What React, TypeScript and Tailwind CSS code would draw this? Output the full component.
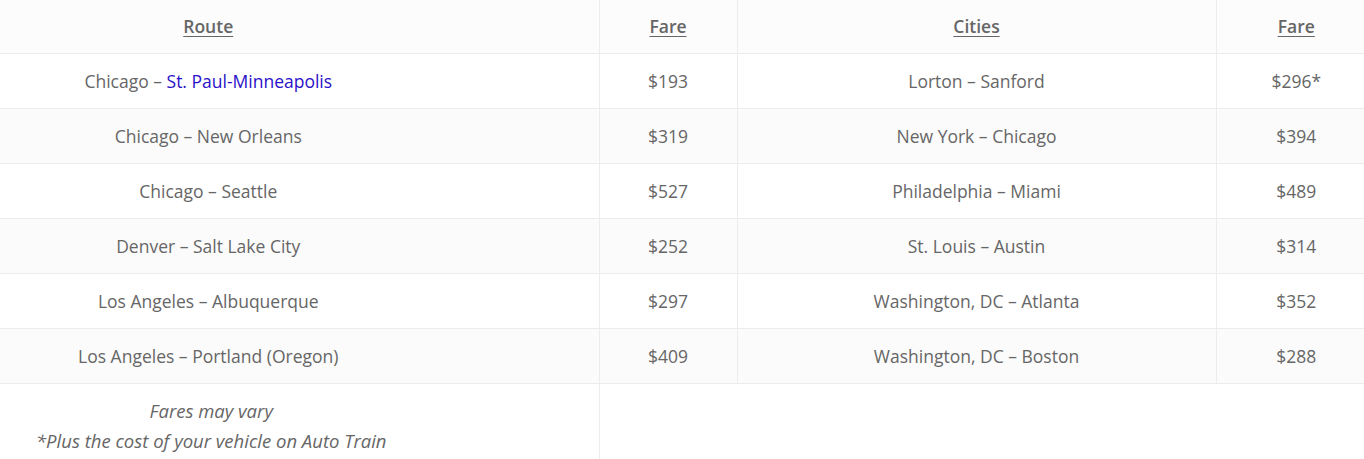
import React from "react";

const rows: [React.ReactNode, string, string, string][] = [
  [
    <>
      Chicago – <span className="text-[#2a10c8]">St. Paul-Minneapolis</span>
    </>,
    "$193",
    "Lorton – Sanford",
    "$296*",
  ],
  ["Chicago – New Orleans", "$319", "New York – Chicago", "$394"],
  ["Chicago – Seattle", "$527", "Philadelphia – Miami", "$489"],
  ["Denver – Salt Lake City", "$252", "St. Louis – Austin", "$314"],
  ["Los Angeles – Albuquerque", "$297", "Washington, DC – Atlanta", "$352"],
  ["Los Angeles – Portland (Oregon)", "$409", "Washington, DC – Boston", "$288"],
];

export default function App() {
  return (
    <div
      className="w-[1364px] h-[459px] overflow-hidden bg-white text-[#666666]"
      style={{ fontFamily: '"Open Sans", sans-serif' }}
    >
      <table className="w-[1364px] table-fixed border-collapse text-[17.5px] text-center">
        <colgroup>
          <col className="w-[599px]" />
          <col className="w-[138px]" />
          <col className="w-[479px]" />
          <col className="w-[148px]" />
        </colgroup>
        <thead>
          <tr className="h-[53px] bg-[#fcfcfc] border-b border-[#ececec]">
            <th className="pr-[182px] font-semibold">
              <span className="underline underline-offset-[3px]">Route</span>
            </th>
            <th className="border-l border-[#ececec] font-semibold">
              <span className="underline underline-offset-[3px]">Fare</span>
            </th>
            <th className="border-l border-[#ececec] font-semibold">
              <span className="underline underline-offset-[3px]">Cities</span>
            </th>
            <th className="border-l border-[#ececec] pl-[12px] font-semibold">
              <span className="underline underline-offset-[3px]">Fare</span>
            </th>
          </tr>
        </thead>
        <tbody>
          {rows.map((r, i) => (
            <tr
              key={i}
              className={`h-[55px] border-b border-[#ececec] ${i % 2 === 1 ? "bg-[#fbfbfb]" : "bg-white"}`}
            >
              <td className="pr-[182px] pt-[2px]">{r[0]}</td>
              <td className="border-l border-[#ececec] pt-[2px]">{r[1]}</td>
              <td className="border-l border-[#ececec] pt-[2px]">{r[2]}</td>
              <td className="border-l border-[#ececec] pl-[12px] pt-[2px]">{r[3]}</td>
            </tr>
          ))}
          <tr className="bg-white">
            <td className="pr-[176px] pt-[12px] pb-[10px] italic text-[18.5px] leading-[30px] align-top">
              Fares may vary
              <br />
              *Plus the cost of your vehicle on Auto Train
            </td>
            <td colSpan={3} className="border-l border-[#ececec]"></td>
          </tr>
        </tbody>
      </table>
    </div>
  );
}
